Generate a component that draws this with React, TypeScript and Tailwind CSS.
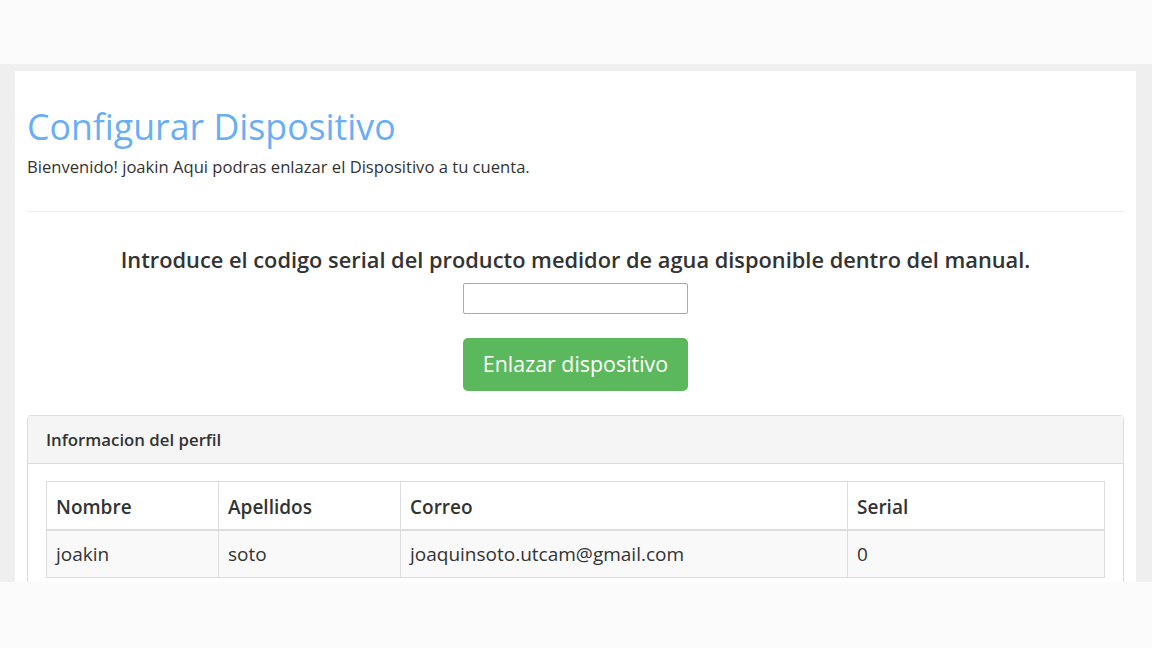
import React from "react";

export default function App() {
  const font = { fontFamily: '"Open Sans", "Noto Sans", sans-serif' };
  return (
    <div className="w-[1152px] h-[648px] bg-[#fbfbfb] flex flex-col" style={font}>
      <div className="h-[64px] bg-[#fbfbfb]" />
      <div className="h-[518px] bg-[#efefef] pl-[15px] pr-[16px] pt-[7px] flex">
        <div className="flex-1 bg-white px-[12px] overflow-hidden">
          <h1 className="text-[35.7px] leading-[40px] text-[#6aaef5] mt-[35px]">Configurar Dispositivo</h1>
          <p className="text-[16.6px] leading-[22px] text-[#333] mt-[10px]">
            Bienvenido! joakin Aqui podras enlazar el Dispositivo a tu cuenta.
          </p>
          <div className="h-px bg-[#eeeeee] mt-[33px]" />
          <div className="flex flex-col items-center">
            <h4 className="text-[21.8px] leading-[28px] font-semibold text-[#333] mt-[34px]">
              Introduce el codigo serial del producto medidor de agua disponible dentro del manual.
            </h4>
            <input className="mt-[9px] w-[225px] h-[31px] border border-[#a9a9a9] rounded-[2px] bg-white" />
            <button className="mt-[24px] w-[225px] h-[53px] rounded-[5px] bg-[#5cb85c] text-white text-[21.4px]">
              Enlazar dispositivo
            </button>
          </div>
          <div className="mt-[24px] border border-[#dddddd] rounded-t-[4px]">
            <div className="h-[48px] bg-[#f5f5f5] border-b border-[#dddddd] flex items-center px-[18px]">
              <span className="text-[16.8px] font-semibold text-[#333]">Informacion del perfil</span>
            </div>
            <div className="px-[18px] pt-[17px] pb-[20px]">
              <table className="w-full border-collapse text-[19px] text-[#333]">
                <thead>
                  <tr className="h-[48px]">
                    <th className="w-[172px] border border-[#dddddd] border-b-2 text-left font-semibold px-[9px] pt-[4px]">Nombre</th>
                    <th className="w-[182px] border border-[#dddddd] border-b-2 text-left font-semibold px-[9px] pt-[4px]">Apellidos</th>
                    <th className="w-[447px] border border-[#dddddd] border-b-2 text-left font-semibold px-[9px] pt-[4px]">Correo</th>
                    <th className="border border-[#dddddd] border-b-2 text-left font-semibold px-[9px] pt-[4px]">Serial</th>
                  </tr>
                </thead>
                <tbody>
                  <tr className="h-[48px] bg-[#f9f9f9]">
                    <td className="border border-[#dddddd] px-[9px]">joakin</td>
                    <td className="border border-[#dddddd] px-[9px]">soto</td>
                    <td className="border border-[#dddddd] px-[9px]">joaquinsoto.utcam@gmail.com</td>
                    <td className="border border-[#dddddd] px-[9px]">0</td>
                  </tr>
                </tbody>
              </table>
            </div>
          </div>
        </div>
      </div>
      <div className="flex-1 bg-[#fbfbfb]" />
    </div>
  );
}
